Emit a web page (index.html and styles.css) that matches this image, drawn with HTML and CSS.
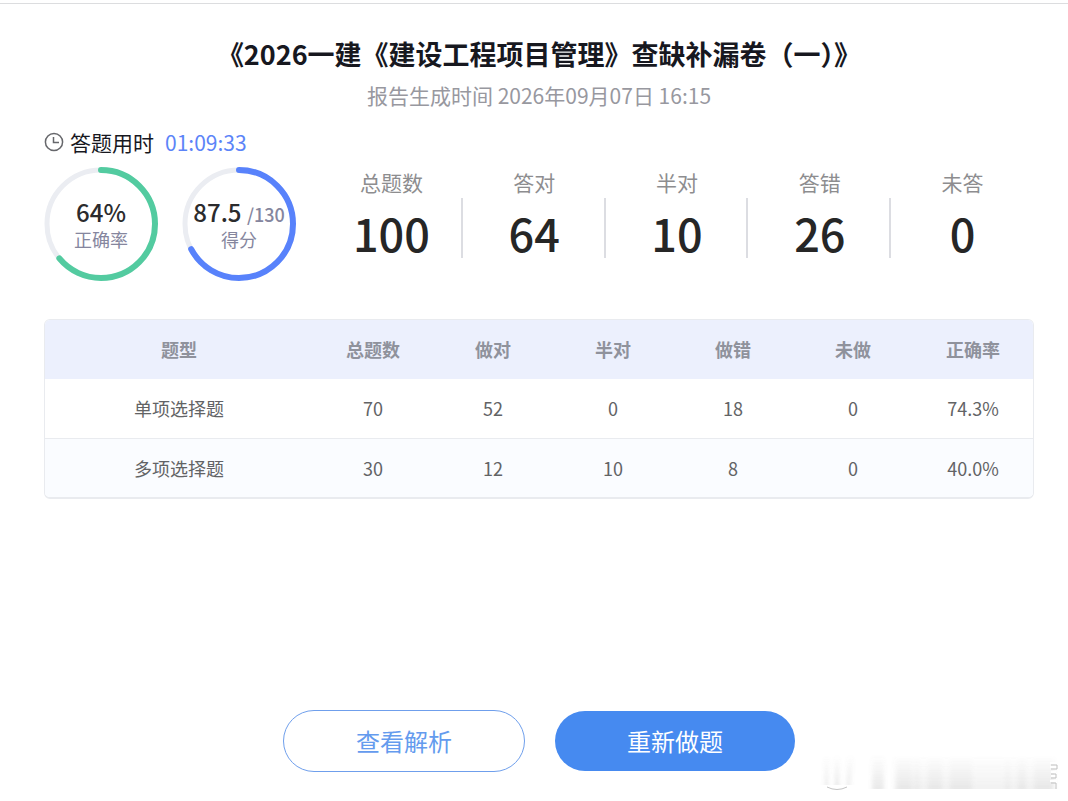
FILE: index.html
```html
<!DOCTYPE html>
<html lang="zh-CN">
<head>
<meta charset="utf-8">
<meta name="viewport" content="width=device-width, initial-scale=1">
<title>答题报告</title>
<link rel="stylesheet" href="styles.css">
</head>
<body>
<main class="report">
  <header class="heading">
    <h1 class="title">《2026一建《建设工程项目管理》查缺补漏卷（一）》</h1>
    <p class="generated">报告生成时间 2026年09月07日 16:15</p>
  </header>

  <div class="duration">
    <svg class="clock" viewBox="0 0 20 20" aria-hidden="true">
      <circle cx="10" cy="10" r="8.6"/>
      <path d="M9.5 5v5.5H15"/>
    </svg>
    <span>答题用时</span>
    <span class="time">01:09:33</span>
  </div>

  <section class="summary">
    <div class="rings">
      <div class="ring">
        <svg class="dial" viewBox="0 0 114 114" aria-hidden="true">
          <circle class="track" cx="57" cy="57" r="54"/>
          <circle class="arc green" cx="57" cy="57" r="54" pathLength="100" stroke-dasharray="64 100"/>
        </svg>
        <div class="reading"><span class="value">64%</span><span class="caption">正确率</span></div>
      </div>
      <div class="ring">
        <svg class="dial" viewBox="0 0 114 114" aria-hidden="true">
          <circle class="track" cx="57" cy="57" r="54"/>
          <circle class="arc blue" cx="57" cy="57" r="54" pathLength="100" stroke-dasharray="67.3 100"/>
        </svg>
        <div class="reading"><span class="value">87.5 <small class="total">/130</small></span><span class="caption">得分</span></div>
      </div>
    </div>
    <dl class="stats">
      <div class="stat"><dt>总题数</dt><dd>100</dd></div>
      <div class="stat"><dt>答对</dt><dd>64</dd></div>
      <div class="stat"><dt>半对</dt><dd>10</dd></div>
      <div class="stat"><dt>答错</dt><dd>26</dd></div>
      <div class="stat"><dt>未答</dt><dd>0</dd></div>
    </dl>
  </section>

  <div class="table-box">
    <table class="types">
      <colgroup><col><col class="num"><col class="num"><col class="num"><col class="num"><col class="num"><col class="num"></colgroup>
      <thead>
        <tr><th scope="col">题型</th><th scope="col">总题数</th><th scope="col">做对</th><th scope="col">半对</th><th scope="col">做错</th><th scope="col">未做</th><th scope="col">正确率</th></tr>
      </thead>
      <tbody>
        <tr><td>单项选择题</td><td>70</td><td>52</td><td>0</td><td>18</td><td>0</td><td>74.3%</td></tr>
        <tr><td>多项选择题</td><td>30</td><td>12</td><td>10</td><td>8</td><td>0</td><td>40.0%</td></tr>
      </tbody>
    </table>
  </div>

  <div class="actions">
    <button type="button" class="btn outline">查看解析</button>
    <button type="button" class="btn solid">重新做题</button>
  </div>
</main>
<svg class="smudge" viewBox="0 0 248 50" aria-hidden="true">
  <defs>
    <linearGradient id="fade" gradientUnits="userSpaceOnUse" x1="0" y1="4" x2="0" y2="38">
      <stop offset="0" stop-color="#777" stop-opacity="0"/>
      <stop offset="1" stop-color="#777" stop-opacity=".2"/>
    </linearGradient>
    <filter id="soft" x="-10%" y="-10%" width="120%" height="120%"><feGaussianBlur stdDeviation="2 .6"/></filter>
  </defs>
  <g filter="url(#soft)" fill="url(#fade)">
    <path d="M5 4h3v30H5zM15 4h4v30h-4zM28 2h5l-3 32h-3z"/>
    <path d="M52 4h12v34H52z" opacity=".8"/>
    <path d="M74 4h160v34H74z" opacity=".5"/>
    <path d="M77 4h15v34H77zM95 4h4v34h-4zM108 4h14v34h-14z" opacity=".4"/>
    <path d="M130 4h22v34h-22z" opacity=".4"/>
    <path d="M186 4h3v34h-3zM198 4h8v34h-8zM214 4h20v34h-20z" opacity=".4"/>
  </g>
  <path d="M7 36q10 5 20 0" fill="none" stroke="#c4c4c4"/>
  <path d="M230 12h6v4h-6M231 21h4v4h-4M230 30h6v6" fill="none" stroke="#fff" stroke-width="2"/>
  <path d="M231 14h6v4h-6M231 23h5v4h-5M231 32h5v6" fill="none" stroke="#c0c0c0"/>
</svg>
</body>
</html>
```
FILE: styles.css
```css
* {
  box-sizing: border-box;
}

body {
  margin: 0;
  min-height: 100vh;
  padding-top: 3px;
  background: #fff;
  color: #17181f;
  font-family: "Noto Sans CJK SC", "Noto Sans", sans-serif;
}

.report {
  display: flex;
  flex-direction: column;
  min-height: calc(100vh - 3px);
  padding: 30px 34px 29px 44px;
  border-top: 1px solid #dcdddf;
}

.heading {
  text-align: center;
}

.title {
  margin: 0;
  font-size: 27px;
  line-height: 40px;
  font-weight: 700;
}

.generated {
  margin: 5px 0 0;
  color: #98989f;
  font-size: 21px;
  line-height: 32px;
}

.duration {
  display: flex;
  align-items: center;
  margin-top: 16px;
  font-size: 21px;
  line-height: 30px;
}

.clock {
  width: 20px;
  height: 20px;
  margin-right: 6px;
  fill: none;
  stroke: #66676b;
  stroke-width: 1.5;
}

.time {
  margin-left: 11px;
  color: #5c84f8;
}

.summary {
  display: flex;
  align-items: flex-start;
  margin-top: 10px;
  gap: 24px;
}

.rings {
  display: flex;
  gap: 24px;
}

.ring {
  display: grid;
  width: 114px;
  height: 114px;
}

.dial,
.reading {
  grid-area: 1 / 1;
}

.dial {
  transform: rotate(-90deg);
}

.track,
.arc {
  fill: none;
  stroke-width: 5;
}

.track {
  stroke: #ebedf2;
}

.arc {
  stroke-width: 6;
  stroke-linecap: round;
}

.green {
  stroke: #53cba0;
}

.blue {
  stroke: #5882fb;
}

.reading {
  display: flex;
  flex-direction: column;
  align-items: center;
  padding-top: 28px;
  white-space: nowrap;
}

.value {
  height: 34px;
  color: #2b2b2d;
  font-size: 24px;
  font-weight: 500;
  line-height: 34px;
}

.total {
  color: #85869e;
  font-size: 18px;
  line-height: 20px;
}

.caption {
  color: #85869e;
  font-size: 18px;
  line-height: 20px;
}

.stats {
  display: flex;
  flex: 1;
  margin: 0;
}

.stat {
  flex: 1;
  text-align: center;
  background: linear-gradient(#dcdde2, #dcdde2) right 31px / 2px 60px no-repeat;
}

.stat:last-child {
  background: none;
}

.stat dt {
  color: #8d8d8f;
  font-size: 21px;
  line-height: 30px;
}

.stat dd {
  margin: 0;
  color: #262626;
  font-size: 45px;
  font-weight: 500;
  line-height: 72px;
}

.table-box {
  margin-top: 38px;
  border: 1px solid #e9ebef;
  border-bottom-width: 2px;
  border-radius: 6px;
  overflow: hidden;
}

.types {
  width: 100%;
  border-collapse: separate;
  border-spacing: 0;
  table-layout: fixed;
  color: #626365;
  font-size: 18px;
  line-height: 27px;
  text-align: center;
}

.num {
  width: 120px;
}

.types th,
.types td {
  height: 59px;
  padding: 0;
}

.types th {
  background: #ecf0fd;
  color: #8f929c;
  font-weight: 700;
}

.types tbody tr:first-child td {
  height: 60px;
  border-bottom: 1px solid #e9ebef;
}

.types tbody tr:last-child td {
  height: 58px;
  background: #fafcff;
}

.actions {
  display: flex;
  justify-content: center;
  align-items: center;
  gap: 30px;
  margin-top: auto;
}

.btn {
  width: 240px;
  height: 60px;
  padding: 0;
  border: 0;
  border-radius: 31px;
  font-family: inherit;
  font-size: 24px;
  line-height: 36px;
  cursor: pointer;
}

.outline {
  width: 242px;
  height: 62px;
  border: 1px solid #6f9fec;
  background: #fff;
  color: #649bee;
}

.solid {
  background: #468af0;
  color: #fff;
}

.smudge {
  position: absolute;
  right: 0;
  bottom: 0;
  width: 248px;
  height: 50px;
  pointer-events: none;
}
```
